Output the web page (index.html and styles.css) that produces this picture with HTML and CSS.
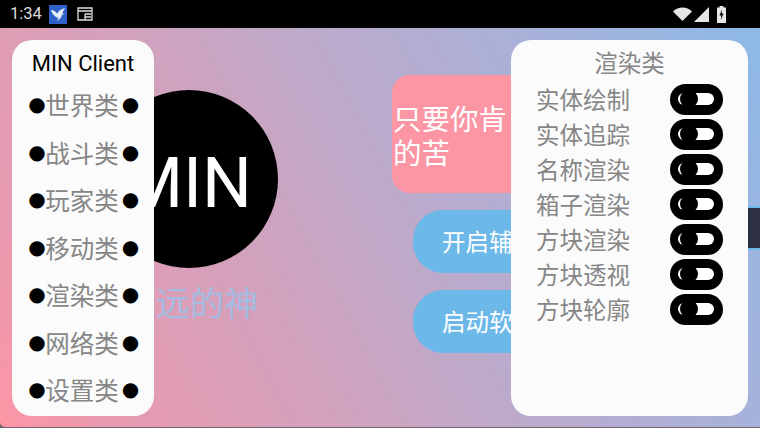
FILE: index.html
```html
<!DOCTYPE html>
<html lang="zh">
<head>
<meta charset="utf-8">
<title>MIN Client</title>
<link rel="stylesheet" href="styles.css">
</head>
<body>
<header class="status">
  <div class="status-left">
    <span class="time">1:34</span>
    <svg class="app-icon" viewBox="0 0 18 19"><rect width="18" height="19" fill="#2f62c8"/><path d="M2 5c2.500 0 4.500 1.500 6 3.500L11 5l5-2-2.500 4.500 1.500 2-1.800-.3c-.5 3-2.500 5.500-5.200 6.800l1.500-3C6 12 3 9 2 5z" fill="#e4eefa"/></svg>
    <svg class="cal-icon" viewBox="0 0 16 14"><path d="M1 1h14v12H1zM1 4h14M8 7h6M8 10h6M8 7v6" fill="none" stroke="#ddd" stroke-width="1.300"/></svg>
  </div>
  <div class="status-right">
    <svg class="wifi" viewBox="0 0 19 14"><path d="M0 4.500C5 -1 14 -1 19 4.500L9.500 14z" fill="#e6e6e6"/></svg>
    <svg class="signal" viewBox="0 0 15 15"><path d="M15 0v15H0z" fill="#e6e6e6"/></svg>
    <svg class="battery" viewBox="0 0 9 17"><path d="M2.500 0h4v1.500H9V17H0V1.500h2.500z" fill="#e6e6e6"/><path d="M5 3.500 2.500 9.500H4.300L3.800 14 6.500 7.500H4.700z" fill="#000"/></svg>
  </div>
</header>

<main class="stage">
  <section class="hero">
    <div class="logo">MIN</div>
    <p class="slogan">永远的神</p>
  </section>
  <section class="actions">
    <div class="quote">只要你肯<br>的苦</div>
    <button class="action">开启辅助</button>
    <button class="action">启动软件</button>
  </section>
  <div class="edge-strip"></div>

  <nav class="panel panel-left">
    <h1 class="brand">MIN Client</h1>
    <div class="nav-row"><i>●</i><span>世界类</span><i>●</i></div>
    <div class="nav-row"><i>●</i><span>战斗类</span><i>●</i></div>
    <div class="nav-row"><i>●</i><span>玩家类</span><i>●</i></div>
    <div class="nav-row"><i>●</i><span>移动类</span><i>●</i></div>
    <div class="nav-row"><i>●</i><span>渲染类</span><i>●</i></div>
    <div class="nav-row"><i>●</i><span>网络类</span><i>●</i></div>
    <div class="nav-row"><i>●</i><span>设置类</span><i>●</i></div>
  </nav>

  <aside class="panel panel-right">
    <h2 class="panel-title">渲染类</h2>
    <div class="opt"><span>实体绘制</span><b class="switch"></b></div>
    <div class="opt"><span>实体追踪</span><b class="switch"></b></div>
    <div class="opt"><span>名称渲染</span><b class="switch"></b></div>
    <div class="opt"><span>箱子渲染</span><b class="switch"></b></div>
    <div class="opt"><span>方块渲染</span><b class="switch"></b></div>
    <div class="opt"><span>方块透视</span><b class="switch"></b></div>
    <div class="opt"><span>方块轮廓</span><b class="switch"></b></div>
  </aside>
</main>
<div class="bottom-edge"></div>
</body>
</html>
```
FILE: styles.css
```css
* { box-sizing: border-box; margin: 0; padding: 0; }
html, body { width: 760px; height: 428px; overflow: hidden; background: #75646f; }
body {
  display: flex;
  flex-direction: column;
  font-family: "Noto Sans CJK SC", "Noto Sans", sans-serif;
}

.status {
  height: 28px;
  flex: none;
  background: #000;
  display: flex;
  justify-content: space-between;
  align-items: center;
  padding: 0 11px 0 10px;
  color: #ddd;
}
.status-left, .status-right { display: flex; align-items: center; }
.time { font: 400 16.500px/1 Roboto, sans-serif; width: 39px; }
.app-icon { width: 18px; height: 19px; }
.cal-icon { width: 16px; height: 14px; margin-left: 10px; }
.wifi { width: 19px; height: 14px; }
.signal { width: 15px; height: 15px; margin-left: 2px; }
.battery { width: 9px; height: 17px; margin-left: 8px; margin-right: 23px; }

.stage {
  position: relative;
  flex: 1;
  display: flex;
  overflow: hidden;
  border-radius: 0 0 0 5px;
  background: linear-gradient(62deg, #fc96a5 0%, #e89ab0 12%, #d6a0ba 31%, #bfa9c9 51%, #a9b1d8 75%, #8db9e7 100%);
}

.hero {
  width: 178px;
  margin: 62px 0 0 100px;
  flex: none;
  display: flex;
  flex-direction: column;
  align-items: center;
}
.logo {
  width: 178px;
  height: 178px;
  border-radius: 50%;
  background: #000;
  color: #fff;
  font: 400 70px/178px Roboto, sans-serif;
  text-align: center;
  padding: 4px 4px 0 0;
}
.slogan {
  margin-top: 11px;
  padding-left: 2px;
  font-size: 34px;
  line-height: 46px;
  color: #a4bce2;
  white-space: nowrap;
}

.actions {
  margin: 47px 0 0 114px;
  display: flex;
  flex-direction: column;
  width: 300px;
  flex: none;
}
.quote {
  width: 292px;
  height: 118px;
  padding: 26px 0 0 1px;
  background: #fc95a4;
  border-radius: 18px;
  color: #fff;
  font-size: 28.500px;
  line-height: 34px;
}
.action {
  align-self: flex-start;
  margin: 17px 0 0 21px;
  width: 250px;
  height: 63px;
  border: 0;
  border-radius: 30px;
  background: #6cb8e8;
  color: #fff;
  font: 400 23.500px/63px "Noto Sans CJK SC", sans-serif;
  text-align: left;
  padding-left: 29px;
}
.action + .action { margin-top: 17px; }

.edge-strip {
  position: absolute;
  right: 0;
  top: 178px;
  width: 12px;
  height: 44px;
  background: #2c3040;
  border-top: 2px solid #6cb8e8;
  border-bottom: 2px solid #6cb8e8;
}

.panel {
  position: absolute;
  top: 12px;
  height: 376px;
  background: #fbfbfb;
  color: #868686;
}
.panel-left {
  left: 12px;
  width: 142px;
  border-radius: 20px;
  padding-top: 6px;
}
.brand {
  height: 35px;
  font: 400 22px/35px Roboto, sans-serif;
  color: #000;
  text-align: center;
}
.nav-row {
  height: 47.500px;
  display: flex;
  justify-content: center;
  align-items: center;
  font-size: 24.500px;
  line-height: 47.500px;
}
.nav-row i {
  font-style: normal;
  color: #000;
  font-family: "DejaVu Sans", sans-serif;
  font-size: 20px;
  width: 16px;
  text-align: center;
}
.nav-row i:last-child { margin-left: 3px; }
.nav-row i:first-child { margin-right: 1px; }

.panel-right {
  left: 511px;
  width: 237px;
  border-radius: 20px;
  padding: 5px 25px 0;
}
.panel-title {
  height: 34px;
  font-size: 23.500px;
  font-weight: 400;
  line-height: 34px;
  text-align: center;
  margin-bottom: 4px;
}
.opt {
  height: 35px;
  display: flex;
  justify-content: space-between;
  align-items: center;
  font-size: 23.500px;
  line-height: 33px;
}
.opt span { margin-bottom: 2px; }
.switch {
  position: relative;
  display: block;
  width: 53px;
  height: 31px;
  margin-top: -3px;
  background: #000;
  border-radius: 16px;
}
.switch::before {
  content: "";
  position: absolute;
  left: 8px;
  top: 9px;
  width: 36px;
  height: 12px;
  background: #fff;
  border-radius: 6px;
}
.switch::after {
  content: "";
  position: absolute;
  left: 10px;
  top: 6px;
  width: 18px;
  height: 18px;
  background: #000;
  border-radius: 50%;
}

.bottom-edge { height: 1px; flex: none; }
```
